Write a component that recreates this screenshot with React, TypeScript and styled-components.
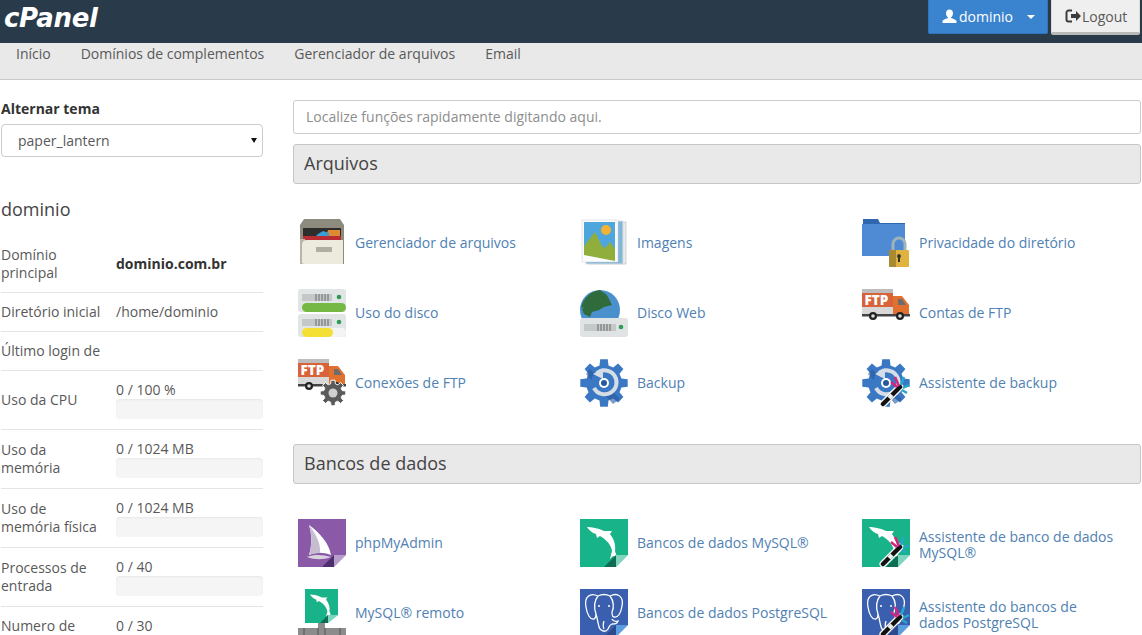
import React from 'react';
import styled, { createGlobalStyle } from 'styled-components';

const LINK_COLOR = '#4f81b3';
const TEXT_COLOR = '#595959';

const GlobalStyle = createGlobalStyle`
  html, body {
    margin: 0;
    padding: 0;
    height: 635px;
    overflow: hidden;
    background: #fff;
  }
  * {
    box-sizing: border-box;
  }
  body {
    font-family: 'Open Sans', 'Liberation Sans', sans-serif;
    font-size: 14px;
    color: ${TEXT_COLOR};
  }
`;

const Header = styled.header`
  display: flex;
  justify-content: space-between;
  height: 43px;
  padding-right: 2px;
  background: #293a4a;
`;

const Logo = styled.div`
  margin: 2px 0 0 4px;
  color: #fff;
  font-family: 'DejaVu Sans', sans-serif;
  font-size: 26px;
  font-weight: 700;
  font-style: italic;
  line-height: 32px;
  letter-spacing: -0.3px;
`;

const HeaderActions = styled.div`
  display: flex;
  align-items: flex-start;
  gap: 3px;
`;

const UserButton = styled.button`
  display: flex;
  align-items: center;
  width: 120px;
  height: 34px;
  padding: 0 0 0 13px;
  border: 1px solid #2f74bd;
  border-top: none;
  border-radius: 0 0 2px 2px;
  background: #3a84cf;
  color: #fff;
  font: inherit;
`;

const Caret = styled.span`
  width: 0;
  height: 0;
  margin-left: 14px;
  border-top: 4px solid #fff;
  border-left: 4px solid transparent;
  border-right: 4px solid transparent;
`;

const LogoutButton = styled.button`
  display: flex;
  align-items: center;
  width: 89px;
  height: 35px;
  padding: 0 0 0 13px;
  border: 1px solid #ddd;
  border-top: none;
  border-bottom: 3px solid #b9b9b9;
  border-radius: 0 0 2px 2px;
  background: #efefef;
  color: ${TEXT_COLOR};
  font: inherit;
`;

const Nav = styled.nav`
  display: flex;
  height: 37px;
  padding: 1px 0 0 1px;
  background: #e9e9e9;
  border-bottom: 1px solid #c9c9c9;
`;

const NavLink = styled.a`
  padding: 0 15px;
  line-height: 20px;
  color: ${TEXT_COLOR};
`;

const Page = styled.div`
  display: flex;
  align-items: flex-start;
  gap: 30px;
  padding: 20px 1px 0 1px;
`;

const Sidebar = styled.aside`
  flex: none;
  width: 262px;
`;

const ThemeLabel = styled.label`
  display: block;
  margin-bottom: 7px;
  color: #333;
  font-weight: 700;
  line-height: 17px;
`;

const SelectWrap = styled.div`
  position: relative;
  &::after {
    content: '';
    position: absolute;
    top: 14px;
    right: 6px;
    border-top: 5px solid #111;
    border-left: 3px solid transparent;
    border-right: 3px solid transparent;
  }
`;

const ThemeSelect = styled.select`
  display: block;
  width: 100%;
  height: 33px;
  padding: 0 16px;
  appearance: none;
  border: 1px solid #ccc;
  border-radius: 4px;
  background: #fff;
  color: ${TEXT_COLOR};
  font: inherit;
`;

const UserName = styled.h2`
  margin: 40px 0 15px;
  color: #444;
  font-size: 18px;
  font-weight: 400;
  line-height: 24px;
`;

const StatRow = styled.div<{ $top?: boolean }>`
  display: grid;
  grid-template-columns: 115px 1fr;
  align-items: ${(p) => (p.$top ? 'start' : 'center')};
  padding: 10px 0;
  border-bottom: 1px solid #e4e4e4;
  line-height: 18px;
`;

const StatName = styled.div`
  padding-right: 8px;
`;

const StatValue = styled.div<{ $strong?: boolean }>`
  color: ${(p) => (p.$strong ? '#333' : TEXT_COLOR)};
  font-weight: ${(p) => (p.$strong ? 700 : 400)};
`;

const Meter = styled.div`
  height: 20px;
  border-radius: 4px;
  background: #f5f5f5;
  box-shadow: inset 0 1px 2px rgba(0, 0, 0, 0.06);
`;

const Content = styled.main`
  flex: 1;
  min-width: 0;
`;

const SearchInput = styled.input`
  display: block;
  width: 100%;
  height: 34px;
  padding: 0 12px 2px;
  border: 1px solid #ccc;
  border-radius: 3px;
  color: ${TEXT_COLOR};
  font: inherit;
  &::placeholder {
    color: #8e8e8e;
    opacity: 1;
  }
`;

const SectionTitle = styled.h3`
  display: flex;
  align-items: center;
  height: 40px;
  margin: 10px 0 0;
  padding: 0 10px 2px;
  border: 1px solid #c6c6c6;
  border-radius: 3px;
  background: #e9e9e9;
  color: #444;
  font-size: 18px;
  font-weight: 400;
`;

const ItemGrid = styled.div`
  display: grid;
  grid-template-columns: repeat(3, 282px);
  grid-auto-rows: 48px;
  row-gap: 22px;
  padding: 35px 0 27px 5px;
`;

const Item = styled.a`
  display: flex;
  align-items: center;
  gap: 9px;
  color: ${LINK_COLOR};
  line-height: 16px;
`;

const ItemIcon = styled.svg`
  flex: none;
  width: 48px;
  height: 48px;
`;

const ItemLabel = styled.span<{ $twoLines?: boolean }>`
  max-width: 198px;
  padding-top: ${(p) => (p.$twoLines ? '4px' : '0')};
`;

const UserGlyph = styled.svg`
  width: 15px;
  height: 15px;
  margin-right: 2px;
`;

const LogoutGlyph = styled.svg`
  width: 17px;
  height: 14px;
`;

function UserIcon() {
  return (
    <UserGlyph viewBox="0 0 15 15">
      <path fill="#fff" d="M7.5 0.5c2.2 0 3.5 1.7 3.5 3.8 0 1.7-.8 3.1-1.7 3.8-.4.4-.3 1 .2 1.2 2 .8 5 1.500 5 3.200v1.500H0.5v-1.500c0-1.700 3-2.400 5-3.200.5-.2.6-.8.2-1.200C4.800 7.400 4 6 4 4.300 4 2.200 5.300.5 7.500.5z" />
    </UserGlyph>
  );
}

function LogoutIcon() {
  return (
    <LogoutGlyph viewBox="0 0 17 14">
      <path fill="none" stroke="#3c3c3c" strokeWidth="2" d="M7 1.500H3.500A2 2 0 0 0 1.500 3.500v7a2 2 0 0 0 2 2H7" />
      <path fill="#3c3c3c" d="M6 5h5V2l5 5-5 5V9H6z" />
    </LogoutGlyph>
  );
}

// folded bottom right corner of the square database icons
function Fold({ dark, light }: { dark: string; light: string }) {
  return (
    <>
      <path fill={dark} d="M24 48 L36 36 V48z" />
      <path fill={light} d="M36 48 V36 H48z" />
      <path fill="#fff" d="M36 48 L48 36 V48z" />
    </>
  );
}

function gearPath(cx: number, cy: number, ro: number, ri: number, teeth: number) {
  const step = (Math.PI * 2) / teeth;
  let d = '';
  for (let i = 0; i < teeth; i++) {
    const a = i * step - Math.PI / 2;
    const pts = [
      [ri, a - step * 0.32],
      [ro, a - step * 0.2],
      [ro, a + step * 0.2],
      [ri, a + step * 0.32],
    ];
    pts.forEach(([r, t], j) => {
      const x = (cx + r * Math.cos(t)).toFixed(1);
      const y = (cy + r * Math.sin(t)).toFixed(1);
      d += `${i === 0 && j === 0 ? 'M' : 'L'}${x} ${y} `;
    });
  }
  return d + 'Z';
}

function Wand() {
  return (
    <g>
      <path stroke="#fff" strokeWidth="7" strokeLinecap="round" d="M21 45 L38 28" />
      <path stroke="#111" strokeWidth="4.500" strokeLinecap="round" d="M21 45 L38 28" />
      <path stroke="#eee" strokeWidth="4.500" d="M27 39 L30 36" />
      <path stroke="#d6247f" strokeWidth="2.500" d="M33 18 L37 27 M29 23 L35 28" />
      <path stroke="#25a7c9" strokeWidth="2.500" d="M42 18 L39 26 M47 26 L41 29 M45 34 L40 31" />
    </g>
  );
}

function Cabinet() {
  return (
    <ItemIcon viewBox="0 0 48 48">
      <path fill="#8d8a7e" d="M6 0h36l4 6v39H2V6z" />
      <rect x="5" y="9" width="38" height="14" fill="#2d2d2d" />
      <rect x="5" y="17" width="38" height="6" fill="#b92c33" />
      <path fill="#e08a33" d="M30 11h12v6H28z" />
      <path fill="#3a9fd0" d="M20 15l5-3 6 2v3H18z" />
      <path fill="#b9b6a8" d="M2 20h5v25H2z" />
      <path fill="#ecebdd" d="M4 26q0-5 5-5h36v24H6q-2 0-2-2z" />
      <rect x="18" y="28" width="16" height="5" fill="#b0aea2" />
    </ItemIcon>
  );
}

function DriveUnit({ y, fill, barWidth }: { y: number; fill: string; barWidth: number }) {
  return (
    <g transform={`translate(0 ${y})`}>
      <rect width="48" height="23" rx="3" fill="#e2e5e5" />
      <rect x="4" y="5" width="30" height="7" fill="#c4c8c8" />
      <path stroke="#6a6a6a" strokeWidth="1" d="M18 5v7M21 5v7M24 5v7M27 5v7M30 5v7" />
      <circle cx="41" cy="8" r="2.300" fill="#2d9c5b" />
      <rect x="4" y="14" width="44" height="9" rx="4.500" fill="#f4f4f4" />
      <rect x="4" y="14" width={barWidth} height="9" rx="4.500" fill={fill} />
    </g>
  );
}

function DiskUsage() {
  return (
    <ItemIcon viewBox="0 0 48 48">
      <DriveUnit y={0} fill="#76b844" barWidth={44} />
      <DriveUnit y={25} fill="#f4e034" barWidth={31} />
    </ItemIcon>
  );
}

function Truck() {
  return (
    <g>
      <rect y="0" width="31" height="5" fill="#bdbdbd" />
      <rect y="4" width="31" height="14" fill="#d8623a" />
      <rect y="18" width="31" height="8" fill="#d8d8d8" />
      <path fill="#e2702f" d="M31 7h9l7 9v10H31z" />
      <path fill="#6d6d6d" d="M36 10h4l4 6h-8z" />
      <rect y="25" width="48" height="2.500" fill="#444" />
      <circle cx="11" cy="27" r="4" fill="#222" />
      <circle cx="11" cy="27" r="1.800" fill="#ddd" />
      <circle cx="38" cy="27" r="4" fill="#222" />
      <circle cx="38" cy="27" r="1.800" fill="#ddd" />
      <text x="2.500" y="16" fill="#fff" fontFamily="'Open Sans', sans-serif" fontSize="13.500" fontWeight="800">
        FTP
      </text>
    </g>
  );
}

function FtpAccounts() {
  return (
    <ItemIcon viewBox="0 0 48 48">
      <Truck />
    </ItemIcon>
  );
}

function FtpConnections() {
  return (
    <ItemIcon viewBox="0 0 48 48">
      <Truck />
      <path fill="#5a5a5a" stroke="#fff" strokeWidth="1" d={gearPath(35, 34, 13, 9.500, 8)} />
      <circle cx="35" cy="34" r="4.500" fill="#cfcfcf" />
    </ItemIcon>
  );
}

function Images() {
  return (
    <ItemIcon viewBox="0 0 48 48">
      <rect x="10" y="3" width="36" height="42" fill="#e9edef" stroke="#aaa" strokeWidth=".5" />
      <rect x="6" y="2" width="37" height="43" fill="#7fb8d8" stroke="#ddd" strokeWidth="1" />
      <rect x="2" y="1" width="36" height="42" fill="#fbfbfb" stroke="#ccd" strokeWidth=".5" />
      <rect x="4" y="3" width="31" height="33" fill="#4ea6dc" />
      <circle cx="26" cy="11" r="5" fill="#f2b233" />
      <path fill="#8fae3c" d="M4 36V27L15 13l7 14 3 2 5-6 5 7v12z" />
    </ItemIcon>
  );
}

function WebDisk() {
  return (
    <ItemIcon viewBox="0 0 48 48">
      <circle cx="20" cy="21" r="20" fill="#4a90cc" />
      <path fill="#2f6b3b" d="M1 19C3 9 11 2 20 1c2 2 6 3 8 7l4 8-8 2-5 3-7 2-2 5-6-3-2-5 3-2z" />
      <rect x="0" y="29" width="48" height="19" rx="3" fill="#e0e3e3" />
      <rect x="4" y="35" width="32" height="7" fill="#c4c8c8" />
      <path stroke="#6a6a6a" strokeWidth="1" d="M18 35v7M21 35v7M24 35v7M27 35v7M30 35v7" />
      <circle cx="41" cy="38" r="2.300" fill="#2d9c5b" />
    </ItemIcon>
  );
}

function PrivacyFolder() {
  return (
    <ItemIcon viewBox="0 0 48 48">
      <path fill="#2f66b0" d="M1 0h15l2 4h25v4H1z" />
      <rect x="0" y="5" width="43" height="32" fill="#4f8ad4" />
      <path fill="none" stroke="#9fb3b8" strokeWidth="3" d="M31 31V25a6 6 0 0 1 12 0v6" />
      <rect x="27" y="31" width="20" height="17" rx="1" fill="#e0b341" />
      <path fill="#a98a2f" d="M27 32a1 1 0 0 1 1-1h6v17h-6a1 1 0 0 1-1-1z" />
      <path fill="#333" d="M37 35a2.200 2.200 0 0 1 1 4v4h-2v-4a2.200 2.200 0 0 1 1-4z" />
    </ItemIcon>
  );
}

function BackupGear({ wand }: { wand?: boolean }) {
  return (
    <ItemIcon viewBox="0 0 48 48">
      <path fill="#3a78c4" d={gearPath(24, 24, 24, 18, 8)} />
      <path fill="#28599f" d="M10 10 L40 40 L33 45 L6 15z" opacity=".6" />
      <circle cx="24" cy="24" r="13" fill="#3a78c4" />
      <path fill="none" stroke="#d6dde6" strokeWidth="4" d="M17 14a12 12 0 1 1-3 15" />
      <path fill="#d6dde6" d="M13 15l10-6v11z" />
      <circle cx="24" cy="24" r="5" fill="#fff" />
      <circle cx="24" cy="24" r="3" fill="#28599f" />
      {wand && <Wand />}
    </ItemIcon>
  );
}

function PhpMyAdmin() {
  return (
    <ItemIcon viewBox="0 0 48 48">
      <rect width="48" height="48" fill="#8a5aa8" />
      <path fill="#fff" d="M11 6C21 13 31 24 33 36 25 33 18 33 11 36 14 27 14 15 11 6z" />
      <path fill="#c7bdd0" d="M11 6C19 16 23 26 22 34 18 34 14 35 11 36 14 27 14 15 11 6z" />
      <path fill="#d9d3de" d="M9 38c8-3 16-2 24 0-8 3-16 3-24 0z" />
      <Fold dark="#4e2f6e" light="#b79dc9" />
    </ItemIcon>
  );
}

const DOLPHIN = 'M7 8C11 8 18 9 24 12L32 12 30 15C34 20 36 26 35 32L37 38 33 37 30 40 32 32C31 26 27 21 20 17L17 19 16 15C12 14 9 11 7 8Z';

function MysqlSquare({ wand }: { wand?: boolean }) {
  return (
    <ItemIcon viewBox="0 0 48 48">
      <rect width="48" height="48" fill="#19b389" />
      <path fill="#fff" d={DOLPHIN} />
      <Fold dark="#0d6e55" light="#7fd4bd" />
      {wand && <Wand />}
    </ItemIcon>
  );
}

function MysqlRemote() {
  return (
    <ItemIcon viewBox="0 0 48 48">
      <rect x="7" y="0" width="33" height="34" fill="#19b389" />
      <g transform="translate(7 0) scale(.7)">
        <path fill="#fff" d={DOLPHIN} />
      </g>
      <path fill="#0d6e55" d="M22 34l8-8v8z" />
      <path fill="#7fd4bd" d="M30 34v-8h10z" />
      <path fill="#fff" d="M30 34l10-8v8z" />
      <rect x="20" y="34" width="7" height="6" fill="#8c8c8c" />
      <rect x="0" y="39" width="48" height="9" fill="#8c8c8c" />
      <path stroke="#555" strokeWidth="1" d="M6 39v9M42 39v9M20 39v9M27 39v9" />
    </ItemIcon>
  );
}

function PostgresSquare({ wand }: { wand?: boolean }) {
  return (
    <ItemIcon viewBox="0 0 48 48">
      <rect width="48" height="48" fill="#3a5fae" />
      <path
        fill="none"
        stroke="#fff"
        strokeWidth="1.300"
        d="M18 7C10 3 4 8 6 18c1 7 4 13 8 12 2-1 2-3 2-5M18 7c4-2 8-2 12 0 8-4 14 1 12 10-1 7-4 12-8 11-2 0-2-3-2-5M18 7c-4 5-4 12-2 18M30 7c4 5 4 12 2 16M16 25c2 6 2 12 4 15 3 3 6 3 8 0 1-2 1-4 4-5 3 0 5 0 6-3-3 1-5 0-6-2M24 32c-1 3-1 6 0 8"
      />
      <circle cx="19" cy="17" r="1" fill="#fff" />
      <circle cx="29" cy="17" r="1" fill="#fff" />
      <Fold dark="#2c4a8c" light="#5a9ee0" />
      {wand && <Wand />}
    </ItemIcon>
  );
}

const stats = [
  { name: 'Domínio principal', value: 'dominio.com.br', strong: true },
  { name: 'Diretório inicial', value: '/home/dominio' },
  { name: 'Último login de', value: '' },
  { name: 'Uso da CPU', value: '0 / 100 %', meter: true },
  { name: 'Uso da memória', value: '0 / 1024 MB', meter: true },
  { name: 'Uso de memória física', value: '0 / 1024 MB', meter: true },
  { name: 'Processos de entrada', value: '0 / 40', meter: true },
  { name: 'Numero de', value: '0 / 30', meter: true, top: true },
];

const fileItems = [
  { label: 'Gerenciador de arquivos', icon: <Cabinet /> },
  { label: 'Imagens', icon: <Images /> },
  { label: 'Privacidade do diretório', icon: <PrivacyFolder /> },
  { label: 'Uso do disco', icon: <DiskUsage /> },
  { label: 'Disco Web', icon: <WebDisk /> },
  { label: 'Contas de FTP', icon: <FtpAccounts /> },
  { label: 'Conexões de FTP', icon: <FtpConnections /> },
  { label: 'Backup', icon: <BackupGear /> },
  { label: 'Assistente de backup', icon: <BackupGear wand /> },
];

const databaseItems = [
  { label: 'phpMyAdmin', icon: <PhpMyAdmin /> },
  { label: 'Bancos de dados MySQL®', icon: <MysqlSquare /> },
  { label: 'Assistente de banco de dados MySQL®', icon: <MysqlSquare wand />, twoLines: true },
  { label: 'MySQL® remoto', icon: <MysqlRemote /> },
  { label: 'Bancos de dados PostgreSQL', icon: <PostgresSquare /> },
  { label: 'Assistente do bancos de dados PostgreSQL', icon: <PostgresSquare wand />, twoLines: true },
];

type SectionItem = { label: string; icon: React.ReactNode; twoLines?: boolean };

function Section({ title, items }: { title: string; items: SectionItem[] }) {
  return (
    <section>
      <SectionTitle>{title}</SectionTitle>
      <ItemGrid>
        {items.map((item) => (
          <Item key={item.label}>
            {item.icon}
            <ItemLabel $twoLines={item.twoLines}>{item.label}</ItemLabel>
          </Item>
        ))}
      </ItemGrid>
    </section>
  );
}

export default function App() {
  return (
    <>
      <GlobalStyle />
      <Header>
        <Logo>cPanel</Logo>
        <HeaderActions>
          <UserButton>
            <UserIcon />
            dominio
            <Caret />
          </UserButton>
          <LogoutButton>
            <LogoutIcon />
            Logout
          </LogoutButton>
        </HeaderActions>
      </Header>
      <Nav>
        <NavLink>Início</NavLink>
        <NavLink>Domínios de complementos</NavLink>
        <NavLink>Gerenciador de arquivos</NavLink>
        <NavLink>Email</NavLink>
      </Nav>
      <Page>
        <Sidebar>
          <ThemeLabel>Alternar tema</ThemeLabel>
          <SelectWrap>
            <ThemeSelect defaultValue="paper_lantern">
              <option>paper_lantern</option>
            </ThemeSelect>
          </SelectWrap>
          <UserName>dominio</UserName>
          {stats.map((s) => (
            <StatRow key={s.name} $top={s.top}>
              <StatName>{s.name}</StatName>
              <StatValue $strong={s.strong}>
                {s.value}
                {s.meter && <Meter />}
              </StatValue>
            </StatRow>
          ))}
        </Sidebar>
        <Content>
          <SearchInput placeholder="Localize funções rapidamente digitando aqui." />
          <Section title="Arquivos" items={fileItems} />
          <Section title="Bancos de dados" items={databaseItems} />
        </Content>
      </Page>
    </>
  );
}
